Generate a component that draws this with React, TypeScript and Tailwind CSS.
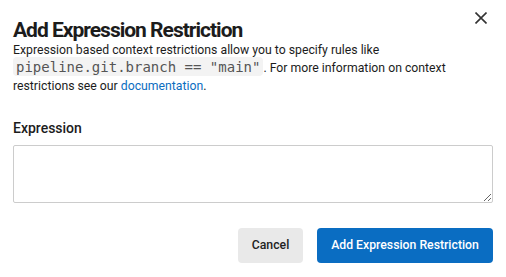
export default function App() {
  return (
    <div className="w-[506px] h-[277px] bg-white px-[13px] pt-[17px] font-['Roboto',sans-serif] text-[#1c1c1c]">
      <div className="flex items-start justify-between">
        <h2 className="text-[21px] font-bold leading-[26px] tracking-[-1px]">Add Expression Restriction</h2>
        <button type="button" className="mr-[6px] mt-[-5px] p-0 text-[#333]" aria-label="Close">
          <svg width="12" height="12" viewBox="0 0 12 12" fill="none" stroke="currentColor" strokeWidth="1.6" className="block">
            <path d="M0.5 0.5 L11.5 11.5 M11.5 0.5 L0.5 11.5" />
          </svg>
        </button>
      </div>
      <p className="mt-[-2.5px] text-[12.25px] leading-[18px]">
        Expression based context restrictions allow you to specify rules like{' '}
        <code className="rounded-[4px] bg-[#f3f3f3] px-[3px] py-[1.5px] font-['DejaVu_Sans_Mono',monospace] text-[14px] leading-[16px] text-[#555]">
          pipeline.git.branch == "main"
        </code>
        . For more information on context restrictions see our{' '}
        <a href="#" className="text-[#0b6dbf]">
          documentation
        </a>
        .
      </p>
      <label className="mt-[24px] block text-[14px] font-medium leading-[18px]" htmlFor="expression">
        Expression
      </label>
      <textarea
        id="expression"
        className="mt-[8.5px] block h-[58px] w-full rounded-[2px] border border-[#cccccc] bg-white"
      />
      <div className="mt-[25px] flex justify-end gap-[14px]">
        <button type="button" className="h-[35px] w-[65px] rounded-[4px] bg-[#e9e9e9] text-[12.25px] font-medium text-[#222]">
          Cancel
        </button>
        <button type="button" className="h-[35px] w-[176px] rounded-[4px] bg-[#0a6dc2] text-[12.25px] font-medium text-white">
          Add Expression Restriction
        </button>
      </div>
    </div>
  );
}
